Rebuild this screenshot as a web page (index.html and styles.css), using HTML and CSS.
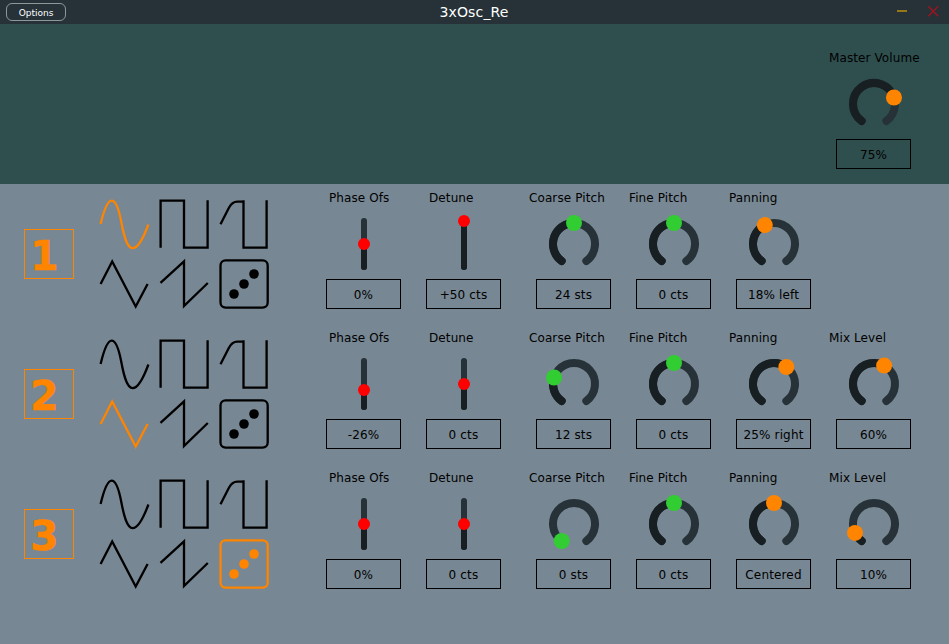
FILE: index.html
```html
<!DOCTYPE html>
<html lang="en">
<head>
<meta charset="utf-8">
<title>3xOsc_Re</title>
<link rel="stylesheet" href="styles.css">
</head>
<body>
<svg class="defs" aria-hidden="true">
  <symbol id="sine" viewBox="0 0 60 60"><path d="M6.6 30C9.4 18.2 13 6.6 17.6 6.6C22.5 6.6 25.2 17 27.2 27.5C29.8 41.5 33 54.2 38.6 54.2C44.5 54.2 49.6 43.5 54.4 30.5"/></symbol>
  <symbol id="square" viewBox="0 0 60 60"><path d="M6.6 53.7V6.6H30V53.7H53.6V6.3"/></symbol>
  <symbol id="ramp" viewBox="0 0 60 60"><path d="M6.5 30.2L14.8 14Q18 7.7 23.3 7.7H29.5M29.5 6.3V53.7H52.6V6.3"/></symbol>
  <symbol id="triangle" viewBox="0 0 60 60"><path d="M6.6 30L18.2 7.4L41.7 52.6L53.6 30"/></symbol>
  <symbol id="saw" viewBox="0 0 60 60"><path d="M6.5 28.8L30 7.4V52L53.8 29"/></symbol>
  <symbol id="dice" viewBox="0 0 60 60"><rect x="6.5" y="6.4" width="47.2" height="47.2" rx="5"/><g fill="currentColor" stroke="none"><circle cx="20" cy="40" r="4.8"/><circle cx="30" cy="30" r="4.8"/><circle cx="40" cy="20" r="4.8"/></g></symbol>
</svg>

<header class="titlebar">
  <button class="options">Options</button>
  <h1>3xOsc_Re</h1>
  <svg class="window-buttons" viewBox="0 0 60 24"><path class="minimise" d="M8 11H18"/><path class="close" d="M39.3 6.3L49.2 16.2M49.2 6.3L39.3 16.2"/></svg>
</header>

<section class="master">
  <div class="control" data-knob="0.75" data-color="orange" data-label="Master Volume" data-value="75%"></div>
</section>

<main>
  <section class="osc" data-wave="sine">
    <div class="number">1</div>
    <div class="waves"></div>
    <div class="sliders">
      <div class="control" data-slider="0.5" data-label="Phase Ofs" data-value="0%"></div>
      <div class="control" data-slider="1" data-label="Detune" data-value="+50 cts"></div>
    </div>
    <div class="control" data-knob="0.5" data-color="green" data-label="Coarse Pitch" data-value="24 sts"></div>
    <div class="control" data-knob="0.5" data-color="green" data-label="Fine Pitch" data-value="0 cts"></div>
    <div class="control" data-knob="0.41" data-color="orange" data-label="Panning" data-value="18% left"></div>
  </section>
  <section class="osc" data-wave="triangle">
    <div class="number">2</div>
    <div class="waves"></div>
    <div class="sliders">
      <div class="control" data-slider="0.37" data-label="Phase Ofs" data-value="-26%"></div>
      <div class="control" data-slider="0.5" data-label="Detune" data-value="0 cts"></div>
    </div>
    <div class="control" data-knob="0.25" data-color="green" data-label="Coarse Pitch" data-value="12 sts"></div>
    <div class="control" data-knob="0.5" data-color="green" data-label="Fine Pitch" data-value="0 cts"></div>
    <div class="control" data-knob="0.625" data-color="orange" data-label="Panning" data-value="25% right"></div>
    <div class="control" data-knob="0.6" data-color="orange" data-label="Mix Level" data-value="60%"></div>
  </section>
  <section class="osc" data-wave="dice">
    <div class="number">3</div>
    <div class="waves"></div>
    <div class="sliders">
      <div class="control" data-slider="0.5" data-label="Phase Ofs" data-value="0%"></div>
      <div class="control" data-slider="0.5" data-label="Detune" data-value="0 cts"></div>
    </div>
    <div class="control" data-knob="0" data-color="green" data-label="Coarse Pitch" data-value="0 sts"></div>
    <div class="control" data-knob="0.5" data-color="green" data-label="Fine Pitch" data-value="0 cts"></div>
    <div class="control" data-knob="0.5" data-color="orange" data-label="Panning" data-value="Centered"></div>
    <div class="control" data-knob="0.1" data-color="orange" data-label="Mix Level" data-value="10%"></div>
  </section>
</main>
<script src="app.js"></script>
</body>
</html>
```
FILE: styles.css
```css
* { box-sizing: border-box; }

body {
  margin: 0;
  height: 644px;
  overflow: hidden;
  background: #778793;
  color: #000;
  font-family: "DejaVu Sans", sans-serif;
  font-size: 12px;
}

.defs { display: none; }

.titlebar {
  display: grid;
  grid-template-columns: 120px 1fr 120px;
  align-items: center;
  height: 24px;
  background: #263238;
}

.options {
  width: 60px;
  height: 18px;
  margin: 0 0 0 6px;
  padding: 1px 0 0;
  border: 1px solid #8e989b;
  border-radius: 6px;
  background: none;
  color: #fff;
  font: 9px/14px "DejaVu Sans", sans-serif;
}

h1 {
  margin: 0 1px 0 0;
  color: #fff;
  font-size: 14px;
  font-weight: 400;
  letter-spacing: 0.15px;
  line-height: 24px;
  text-align: center;
}

.window-buttons {
  justify-self: end;
  width: 60px;
  height: 24px;
  fill: none;
}

.minimise { stroke: #957717; stroke-width: 2; }
.close { stroke: #a3121d; stroke-width: 1.3; }

.master {
  display: flex;
  justify-content: flex-end;
  height: 160px;
  padding: 20px 25px 0 0;
  background: #2f4f4f;
}

.osc {
  display: flex;
  height: 140px;
}

.number {
  width: 50px;
  height: 50px;
  margin: 45px 20px 0 24px;
  padding-left: 5px;
  border: 1px solid #ff8400;
  color: #ff8400;
  font-size: 41px;
  font-weight: 700;
  line-height: 52px;
  -webkit-text-stroke: 0.5px #ff8400;
}

.waves {
  display: grid;
  grid-template-columns: repeat(3, 60px);
  grid-template-rows: repeat(2, 60px);
  margin: 10px 40px 0 0;
}

.wave {
  width: 60px;
  height: 60px;
  color: #000;
  fill: none;
  stroke: currentColor;
  stroke-width: 2.3;
}

.wave.selected { color: #ff8400; }

.sliders {
  display: flex;
  margin-right: 10px;
}

.control {
  display: flex;
  flex-direction: column;
  width: 100px;
}

.label {
  padding-left: 5px;
  line-height: 28px;
  height: 30px;
  letter-spacing: 0.1px;
  white-space: nowrap;
}

.sliders .label { padding-left: 15px; }

.dial {
  display: block;
  width: 100px;
  height: 60px;
  fill: none;
  stroke-linecap: round;
  overflow: visible;
}

.track, .fill { stroke-width: 8; }
.sliders .track, .sliders .fill { stroke-width: 6; }
.track { stroke: #263238; }
.fill { stroke: #181f22; }
.orange { fill: #ff8400; }
.green { fill: #32cd32; }
.red { fill: #f00; }

.value {
  width: 75px;
  height: 30px;
  margin: 5px 0 0 12px;
  border: 1px solid #000;
  letter-spacing: 0.15px;
  line-height: 30px;
  text-align: center;
  white-space: nowrap;
}
```
FILE: app.js
```js
const WAVES = ["sine", "square", "ramp", "triangle", "saw", "dice"];
const SWEEP = 288;

function point(degrees) {
  const a = degrees * Math.PI / 180;
  return [50 + 21 * Math.sin(a), 30 - 21 * Math.cos(a)];
}

function arc(from, to) {
  return `M${point(from)}A21 21 0 ${to - from > 180 ? 1 : 0} 1 ${point(to)}`;
}

function knob(value, color) {
  const start = -SWEEP / 2;
  const angle = start + SWEEP * value;
  const [x, y] = point(angle);
  const fill = value > 0 ? `<path class="fill" d="${arc(start, angle)}"/>` : "";
  return `<path class="track" d="${arc(start, -start)}"/>${fill}<circle class="${color}" cx="${x}" cy="${y}" r="8"/>`;
}

function slider(value) {
  const y = 53 - 46 * value;
  return `<path class="track" d="M50 7V53"/><path class="fill" d="M50 ${y}V53"/><circle class="red" cx="50" cy="${y}" r="6"/>`;
}

document.querySelectorAll(".control").forEach(el => {
  const { knob: k, slider: s, color, label, value } = el.dataset;
  const dial = k !== undefined ? knob(Number(k), color) : slider(Number(s));
  el.innerHTML = `<div class="label">${label}</div><svg class="dial" viewBox="0 0 100 60">${dial}</svg><div class="value">${value}</div>`;
});

document.querySelectorAll(".osc").forEach(osc => {
  osc.querySelector(".waves").innerHTML = WAVES.map(w =>
    `<svg class="wave${w === osc.dataset.wave ? " selected" : ""}"><use href="#${w}"/></svg>`).join("");
});
```
